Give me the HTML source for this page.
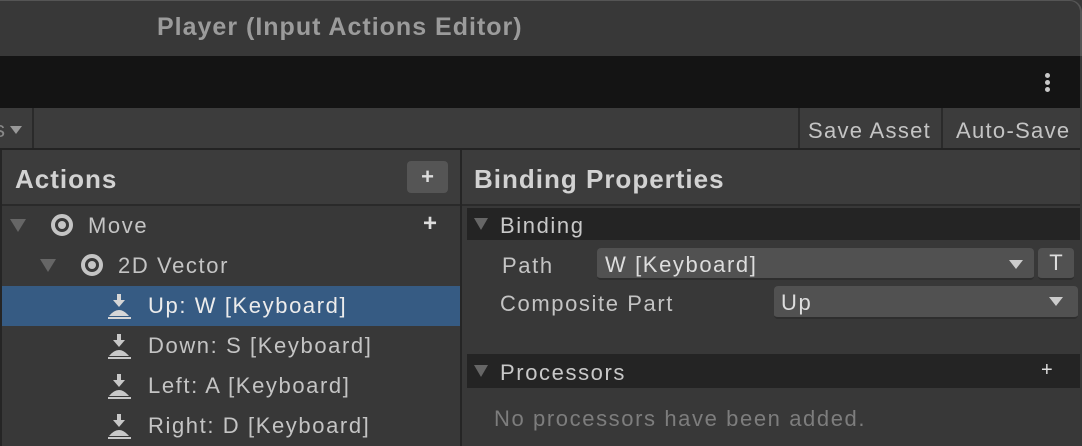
<!DOCTYPE html>
<html><head><meta charset="utf-8"><style>
*{margin:0;padding:0;box-sizing:border-box}
body{width:1082px;height:446px;overflow:hidden;background:#383838;font-family:"Liberation Sans",sans-serif;position:relative;color:#c8c8c8}
.a{position:absolute}
.t{font-size:22px;letter-spacing:1.6px;white-space:nowrap;line-height:1}
</style></head><body>
<div class="a" style="left:0;top:0;width:1082px;height:56px;background:#383838;border-top:1px solid #555;border-right:2px solid #555;border-top-right-radius:12px"></div>
<div class="a" style="left:157px;top:13px;font-size:25px;font-weight:bold;color:#9b9b9b;letter-spacing:1px">Player (Input Actions Editor)</div>
<div class="a" style="left:0;top:56px;width:1080px;height:52px;background:#141414"></div>
<div class="a" style="left:1045px;top:73px;width:5px;height:5px;border-radius:50%;background:#c8c8c8"></div>
<div class="a" style="left:1045px;top:80px;width:5px;height:5px;border-radius:50%;background:#c8c8c8"></div>
<div class="a" style="left:1045px;top:87px;width:5px;height:5px;border-radius:50%;background:#c8c8c8"></div>
<div class="a" style="left:0;top:108px;width:1080px;height:42px;background:#3c3c3c;border-bottom:2px solid #232323"></div>
<div class="a t" style="left:-6px;top:119px;color:#888">s</div>
<div class="a" style="left:10px;top:126px;border-left:6px solid transparent;border-right:6px solid transparent;border-top:8px solid #999"></div>
<div class="a" style="left:32px;top:108px;width:2px;height:40px;background:#2a2a2a"></div>
<div class="a" style="left:798px;top:108px;width:2px;height:40px;background:#2a2a2a"></div>
<div class="a" style="left:941px;top:108px;width:2px;height:40px;background:#2a2a2a"></div>
<div class="a t" style="left:808px;top:120px;color:#c4c4c4;letter-spacing:1.3px">Save Asset</div>
<div class="a t" style="left:956px;top:120px;color:#c4c4c4;letter-spacing:1.3px">Auto-Save</div>
<div class="a" style="left:0;top:150px;width:2px;height:296px;background:#252525"></div>
<div class="a" style="left:2px;top:150px;width:458px;height:54px;background:#3c3c3c"></div>
<div class="a" style="left:2px;top:204px;width:458px;height:2px;background:#2a2a2a"></div>
<div class="a" style="left:15px;top:164px;font-size:26px;font-weight:bold;color:#d2d2d2;letter-spacing:1px">Actions</div>
<div class="a" style="left:407px;top:161px;width:41px;height:32px;background:#555;border-radius:4px;color:#ddd;font-size:22px;font-weight:bold;text-align:center;line-height:32px">+</div>
<div class="a" style="left:460px;top:150px;width:2px;height:296px;background:#252525"></div>
<div class="a" style="left:10px;top:219px;border-left:8px solid transparent;border-right:8px solid transparent;border-top:13px solid #666"></div>
<div class="a" style="left:51px;top:214px;width:22px;height:22px;border-radius:50%;border:4px solid #c4c4c4"><div style="margin:3px;width:8px;height:8px;border-radius:50%;background:#c4c4c4"></div></div>
<div class="a t" style="left:88px;top:215px;color:#c4c4c4">Move</div>
<div class="a t" style="left:423px;top:212px;font-size:24px;font-weight:bold;color:#ddd">+</div>
<div class="a" style="left:40px;top:259px;border-left:8px solid transparent;border-right:8px solid transparent;border-top:13px solid #666"></div>
<div class="a" style="left:81px;top:254px;width:22px;height:22px;border-radius:50%;border:4px solid #c4c4c4"><div style="margin:3px;width:8px;height:8px;border-radius:50%;background:#c4c4c4"></div></div>
<div class="a t" style="left:118px;top:255px;color:#c4c4c4">2D Vector</div>
<div class="a" style="left:2px;top:286px;width:458px;height:40px;background:#365b83"></div>
<svg class="a" style="left:104px;top:292px" width="30" height="28" viewBox="0 0 30 28"><g fill="#d6d6d6"><rect x="13" y="2" width="4" height="8"/><path d="M9 8h12l-6 7z"/><path d="M5 24 Q15 12 25 24z"/><rect x="4" y="25" width="23" height="2"/></g></svg>
<div class="a t" style="left:148px;top:295px;color:#ececec">Up: W [Keyboard]</div>
<svg class="a" style="left:104px;top:332px" width="30" height="28" viewBox="0 0 30 28"><g fill="#c8c8c8"><rect x="13" y="2" width="4" height="8"/><path d="M9 8h12l-6 7z"/><path d="M5 24 Q15 12 25 24z"/><rect x="4" y="25" width="23" height="2"/></g></svg>
<div class="a t" style="left:148px;top:335px;color:#c4c4c4">Down: S [Keyboard]</div>
<svg class="a" style="left:104px;top:372px" width="30" height="28" viewBox="0 0 30 28"><g fill="#c8c8c8"><rect x="13" y="2" width="4" height="8"/><path d="M9 8h12l-6 7z"/><path d="M5 24 Q15 12 25 24z"/><rect x="4" y="25" width="23" height="2"/></g></svg>
<div class="a t" style="left:148px;top:375px;color:#c4c4c4">Left: A [Keyboard]</div>
<svg class="a" style="left:104px;top:412px" width="30" height="28" viewBox="0 0 30 28"><g fill="#c8c8c8"><rect x="13" y="2" width="4" height="8"/><path d="M9 8h12l-6 7z"/><path d="M5 24 Q15 12 25 24z"/><rect x="4" y="25" width="23" height="2"/></g></svg>
<div class="a t" style="left:148px;top:415px;color:#c4c4c4">Right: D [Keyboard]</div>
<div class="a" style="left:462px;top:150px;width:618px;height:54px;background:#3c3c3c"></div>
<div class="a" style="left:462px;top:204px;width:618px;height:2px;background:#2a2a2a"></div>
<div class="a" style="left:474px;top:164px;font-size:26px;font-weight:bold;color:#d2d2d2;letter-spacing:1px">Binding Properties</div>
<div class="a" style="left:467px;top:208px;width:613px;height:32px;background:#242424"></div>
<div class="a" style="left:474px;top:218px;border-left:7px solid transparent;border-right:7px solid transparent;border-top:12px solid #666"></div>
<div class="a t" style="left:500px;top:215px;color:#c8c8c8">Binding</div>
<div class="a t" style="left:502px;top:255px;color:#c4c4c4">Path</div>
<div class="a" style="left:597px;top:248px;width:437px;height:32px;background:#515151;border-radius:4px;border-bottom:2px solid #2e2e2e"></div>
<div class="a t" style="left:605px;top:254px;color:#ddd">W [Keyboard]</div>
<div class="a" style="left:1009px;top:260px;border-left:7px solid transparent;border-right:7px solid transparent;border-top:9px solid #ccc"></div>
<div class="a" style="left:1038px;top:248px;width:36px;height:32px;background:#515151;border-radius:4px;border-bottom:2px solid #2e2e2e;text-align:center;font-size:22px;line-height:30px;color:#ddd">T</div>
<div class="a t" style="left:500px;top:293px;color:#c4c4c4">Composite Part</div>
<div class="a" style="left:774px;top:286px;width:304px;height:33px;background:#515151;border-radius:4px;border-bottom:2px solid #2e2e2e"></div>
<div class="a t" style="left:781px;top:292px;color:#ddd">Up</div>
<div class="a" style="left:1049px;top:297px;border-left:7px solid transparent;border-right:7px solid transparent;border-top:9px solid #ccc"></div>
<div class="a" style="left:467px;top:354px;width:613px;height:34px;background:#242424"></div>
<div class="a" style="left:474px;top:365px;border-left:7px solid transparent;border-right:7px solid transparent;border-top:12px solid #666"></div>
<div class="a t" style="left:500px;top:362px;color:#c8c8c8">Processors</div>
<div class="a t" style="left:1041px;top:360px;font-size:20px;color:#ddd">+</div>
<div class="a t" style="left:494px;top:408px;color:#7d7d7d">No processors have been added.</div>
</body></html>
